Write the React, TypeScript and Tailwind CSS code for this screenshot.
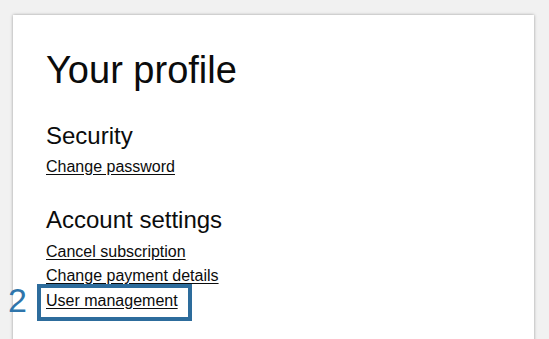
import React from "react";

const links = {
  security: ["Change password"],
  account: ["Cancel subscription", "Change payment details"],
};

const App: React.FC = () => {
  return (
    <div className="relative h-[339px] w-[549px] overflow-hidden bg-[#f1f1f1] font-['Liberation_Sans',Arial,sans-serif] text-[#0b0c0c]">
      <div className="ml-[13px] mt-[15px] h-[400px] w-[521px] bg-white pl-[33px] pt-[32px] shadow-[0_0_3px_rgba(0,0,0,0.35)]">
        <h1 className="text-[38px] leading-[46px] font-normal">Your profile</h1>

        <h2 className="mt-[29px] text-[24px] leading-[28px] font-normal">Security</h2>
        <div className="mt-[5px] flex flex-col items-start">
          {links.security.map((l) => (
            <a key={l} href="#" className="text-[16px] leading-[24px] underline underline-offset-[2px]">
              {l}
            </a>
          ))}
        </div>

        <h2 className="mt-[27px] text-[24px] leading-[28px] font-normal">Account settings</h2>
        <div className="mt-[6px] flex flex-col items-start">
          {links.account.map((l) => (
            <a key={l} href="#" className="text-[16px] leading-[24px] underline underline-offset-[2px]">
              {l}
            </a>
          ))}
          <a href="#" className="mt-[1px] text-[16px] leading-[24px] underline underline-offset-[2px]">
            User management
          </a>
        </div>
      </div>

      {/* annotation overlay */}
      <div className="absolute left-[37px] top-[284px] h-[37px] w-[155px] border-[4px] border-[#2d6c9c]" />
      <span className="absolute left-[8px] top-[281px] text-[34px] leading-[38px] text-[#2f75ab]">2</span>
    </div>
  );
};

export default App;
